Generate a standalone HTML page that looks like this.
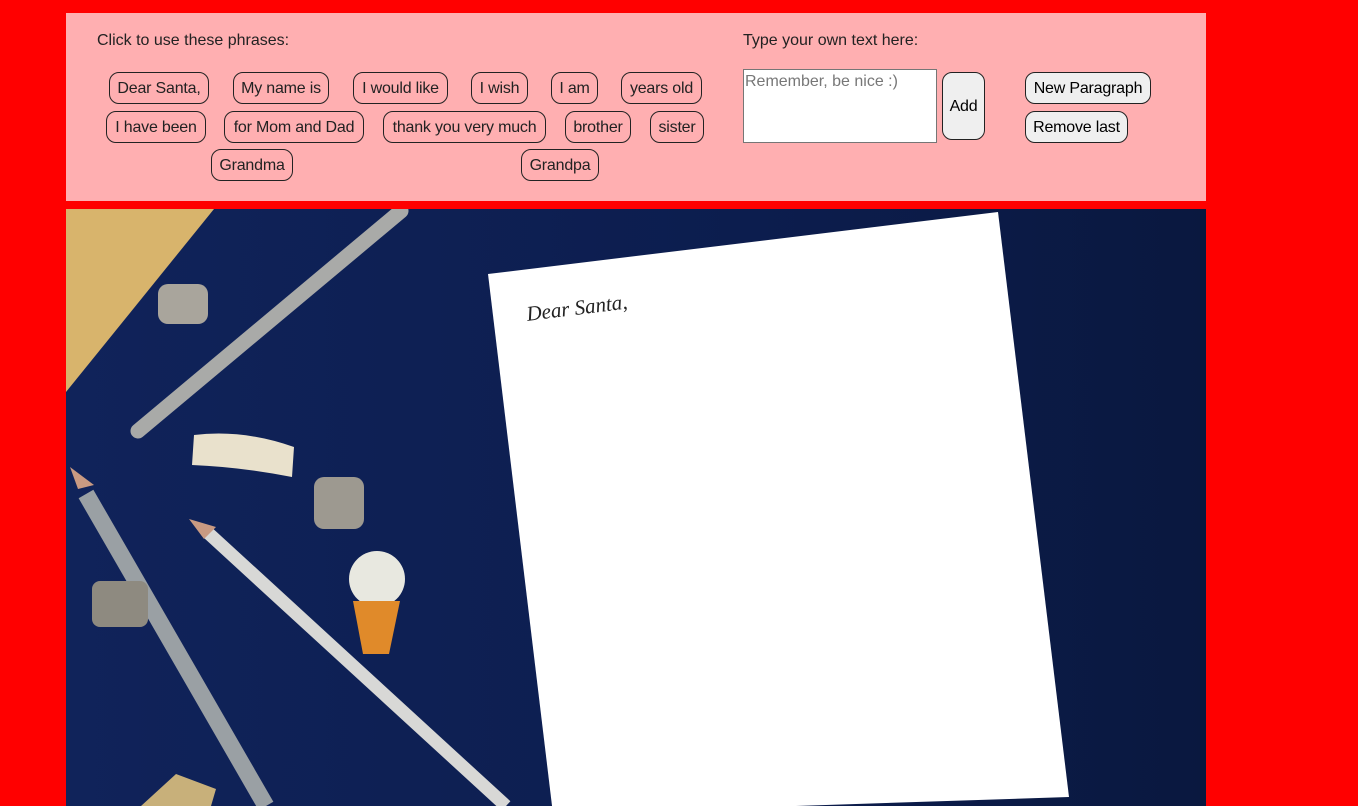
<!DOCTYPE html>
<html><head><meta charset="utf-8"><style>
html,body{margin:0;padding:0;width:1358px;height:806px;overflow:hidden;background:#ff0000;font-family:"Liberation Sans",sans-serif;}
#panel{position:absolute;left:66px;top:13px;width:1140px;height:188px;background:#ffafb1;}
.lbl{position:absolute;font-size:16px;color:#222;}
.b{position:absolute;border:1px solid #222;border-radius:10px;box-sizing:border-box;height:32px;font-size:16px;color:#222;line-height:31px;text-align:center;background:transparent;letter-spacing:-0.2px;white-space:nowrap;}
.g{background:#efefef;color:#000;}
#ta{position:absolute;left:677px;top:56px;width:194px;height:74px;box-sizing:border-box;border:1px solid #767676;background:#fff;font-size:16px;color:#777;padding:3px 1px;}
#img{position:absolute;left:66px;top:209px;width:1140px;height:597px;overflow:hidden;}
#ds{position:absolute;left:525px;top:302px;font-family:"Liberation Serif",serif;font-style:italic;font-size:21px;color:#222;transform:rotate(-7deg);transform-origin:left top;}
</style></head><body>
<div id="panel">
<div class="lbl" style="left:31px;top:19px">Click to use these phrases:</div>
<div class="b" style="left:43px;top:59px;width:100px">Dear Santa,</div>
<div class="b" style="left:167px;top:59px;width:96px">My name is</div>
<div class="b" style="left:287px;top:59px;width:95px">I would like</div>
<div class="b" style="left:405px;top:59px;width:57px">I wish</div>
<div class="b" style="left:485px;top:59px;width:47px">I am</div>
<div class="b" style="left:555px;top:59px;width:81px">years old</div>
<div class="b" style="left:40px;top:98px;width:100px">I have been</div>
<div class="b" style="left:158px;top:98px;width:140px">for Mom and Dad</div>
<div class="b" style="left:317px;top:98px;width:163px">thank you very much</div>
<div class="b" style="left:499px;top:98px;width:66px">brother</div>
<div class="b" style="left:584px;top:98px;width:54px">sister</div>
<div class="b" style="left:145px;top:136px;width:82px">Grandma</div>
<div class="b" style="left:455px;top:136px;width:78px">Grandpa</div>
<div class="lbl" style="left:677px;top:19px">Type your own text here:</div>
<div id="ta">Remember, be nice :)</div>
<div class="b g" style="left:876px;top:59px;width:43px;height:68px;line-height:67px">Add</div>
<div class="b g" style="left:959px;top:59px;width:126px">New Paragraph</div>
<div class="b g" style="left:959px;top:98px;width:103px">Remove last</div>
</div>
<div id="img">
<svg width="1140" height="597" viewBox="0 0 1140 597">
<defs><linearGradient id="bg" x1="0" y1="0" x2="1" y2="0"><stop offset="0" stop-color="#10235a"/><stop offset="0.6" stop-color="#0c1d4e"/><stop offset="1" stop-color="#0a183f"/></linearGradient></defs>
<rect width="1140" height="597" fill="url(#bg)"/>
<polygon points="0,0 148,0 0,183" fill="#d8b46c"/>
<line x1="335" y1="2" x2="72" y2="222" stroke="#a9aaa8" stroke-width="15" stroke-linecap="round"/>
<line x1="20" y1="285" x2="200" y2="597" stroke="#9aa0a4" stroke-width="17"/>
<polygon points="4,258 12,280 28,276" fill="#c99a82"/>
<line x1="140" y1="322" x2="440" y2="597" stroke="#d8d8d6" stroke-width="13"/>
<polygon points="123,310 138,330 150,318" fill="#c99a82"/>
<path d="M128,226 Q177,220 228,238 L226,268 Q175,258 126,256Z" fill="#e9e1cc"/>
<rect x="92" y="75" width="50" height="40" rx="10" fill="#a9a59c"/>
<rect x="248" y="268" width="50" height="52" rx="10" fill="#9d9990"/>
<rect x="26" y="372" width="56" height="46" rx="8" fill="#8e8a80"/>
<ellipse cx="311" cy="370" rx="28" ry="28" fill="#e8e8e0"/>
<polygon points="287,392 334,392 323,445 297,445" fill="#e08a2a"/>
<polygon points="75,597 110,565 150,580 145,597" fill="#c8b07a"/>
<polygon points="422,65 932,3 1003,588 487,605" fill="#ffffff"/>
</svg>
</div>
<div id="ds">Dear Santa,</div>
</body></html>
